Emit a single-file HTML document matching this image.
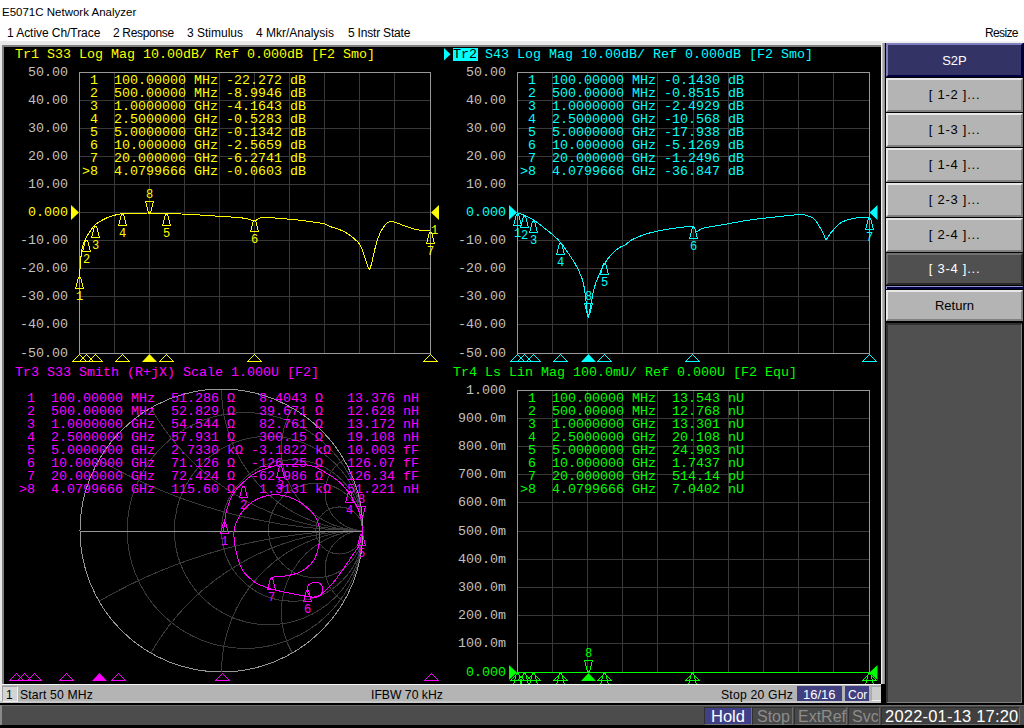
<!DOCTYPE html><html><head><meta charset="utf-8"><style>
*{margin:0;padding:0;box-sizing:border-box}
html,body{width:1024px;height:728px;overflow:hidden;background:#f0f0f0}
.a{position:absolute}
.t{position:absolute;white-space:pre;font-family:"Liberation Mono",monospace;font-size:13.333px;line-height:13px}
.s{position:absolute;white-space:pre;font-family:"Liberation Sans",sans-serif;font-size:12px;line-height:14px;color:#000}
.btn{position:absolute;left:886px;width:136px;height:33px;background:#b4b4b4;border-top:1px solid #f0f0f0;border-left:1px solid #f0f0f0;border-right:1px solid #606060;border-bottom:1px solid #606060;font-family:"Liberation Sans",sans-serif;font-size:12px;text-align:center;line-height:31px;color:#000}
</style></head><body>

<div class="a" style="left:0;top:0;width:1024px;height:41px;background:#fff"></div>
<div class="s" style="left:2px;top:5px;font-size:11.5px">E5071C Network Analyzer</div>
<div class="s" style="left:7px;top:26px;letter-spacing:-0.06px">1 Active Ch/Trace</div>
<div class="s" style="left:113px;top:26px;letter-spacing:-0.33px">2 Response</div>
<div class="s" style="left:187px;top:26px;letter-spacing:0px">3 Stimulus</div>
<div class="s" style="left:256px;top:26px;letter-spacing:0px">4 Mkr/Analysis</div>
<div class="s" style="left:348px;top:26px;letter-spacing:-0.2px">5 Instr State</div>
<div class="s" style="left:985px;top:26px;letter-spacing:-0.65px">Resize</div>
<div class="a" style="left:0;top:41px;width:885px;height:663px;background:#e8e8e8"></div>
<div class="a" style="left:2px;top:45px;width:881px;height:2px;background:#808080"></div>
<div class="a" style="left:2px;top:45px;width:2px;height:639px;background:#808080"></div>
<div class="a" style="left:4px;top:47px;width:877px;height:637px;background:#000"></div>
<svg class="a" style="left:0;top:0" width="1024" height="728" viewBox="0 0 1024 728"><line x1="114.5" y1="72" x2="114.5" y2="354" stroke="#383838" stroke-width="1"/>
<line x1="149.5" y1="72" x2="149.5" y2="354" stroke="#383838" stroke-width="1"/>
<line x1="184.5" y1="72" x2="184.5" y2="354" stroke="#383838" stroke-width="1"/>
<line x1="219.5" y1="72" x2="219.5" y2="354" stroke="#383838" stroke-width="1"/>
<line x1="254.5" y1="72" x2="254.5" y2="354" stroke="#383838" stroke-width="1"/>
<line x1="289.5" y1="72" x2="289.5" y2="354" stroke="#383838" stroke-width="1"/>
<line x1="324.5" y1="72" x2="324.5" y2="354" stroke="#383838" stroke-width="1"/>
<line x1="359.5" y1="72" x2="359.5" y2="354" stroke="#383838" stroke-width="1"/>
<line x1="394.5" y1="72" x2="394.5" y2="354" stroke="#383838" stroke-width="1"/>
<line x1="79" y1="100.5" x2="431" y2="100.5" stroke="#383838" stroke-width="1"/>
<line x1="79" y1="128.5" x2="431" y2="128.5" stroke="#383838" stroke-width="1"/>
<line x1="79" y1="156.5" x2="431" y2="156.5" stroke="#383838" stroke-width="1"/>
<line x1="79" y1="184.5" x2="431" y2="184.5" stroke="#383838" stroke-width="1"/>
<line x1="79" y1="212.5" x2="431" y2="212.5" stroke="#383838" stroke-width="1"/>
<line x1="79" y1="240.5" x2="431" y2="240.5" stroke="#383838" stroke-width="1"/>
<line x1="79" y1="268.5" x2="431" y2="268.5" stroke="#383838" stroke-width="1"/>
<line x1="79" y1="296.5" x2="431" y2="296.5" stroke="#383838" stroke-width="1"/>
<line x1="79" y1="324.5" x2="431" y2="324.5" stroke="#383838" stroke-width="1"/>
<rect x="79.5" y="72.5" width="351" height="281" fill="none" stroke="#989898" stroke-width="1"/>
<line x1="552.5" y1="72" x2="552.5" y2="354" stroke="#383838" stroke-width="1"/>
<line x1="587.5" y1="72" x2="587.5" y2="354" stroke="#383838" stroke-width="1"/>
<line x1="622.5" y1="72" x2="622.5" y2="354" stroke="#383838" stroke-width="1"/>
<line x1="657.5" y1="72" x2="657.5" y2="354" stroke="#383838" stroke-width="1"/>
<line x1="693.5" y1="72" x2="693.5" y2="354" stroke="#383838" stroke-width="1"/>
<line x1="728.5" y1="72" x2="728.5" y2="354" stroke="#383838" stroke-width="1"/>
<line x1="763.5" y1="72" x2="763.5" y2="354" stroke="#383838" stroke-width="1"/>
<line x1="798.5" y1="72" x2="798.5" y2="354" stroke="#383838" stroke-width="1"/>
<line x1="833.5" y1="72" x2="833.5" y2="354" stroke="#383838" stroke-width="1"/>
<line x1="517" y1="100.5" x2="870" y2="100.5" stroke="#383838" stroke-width="1"/>
<line x1="517" y1="128.5" x2="870" y2="128.5" stroke="#383838" stroke-width="1"/>
<line x1="517" y1="156.5" x2="870" y2="156.5" stroke="#383838" stroke-width="1"/>
<line x1="517" y1="184.5" x2="870" y2="184.5" stroke="#383838" stroke-width="1"/>
<line x1="517" y1="212.5" x2="870" y2="212.5" stroke="#383838" stroke-width="1"/>
<line x1="517" y1="240.5" x2="870" y2="240.5" stroke="#383838" stroke-width="1"/>
<line x1="517" y1="268.5" x2="870" y2="268.5" stroke="#383838" stroke-width="1"/>
<line x1="517" y1="296.5" x2="870" y2="296.5" stroke="#383838" stroke-width="1"/>
<line x1="517" y1="324.5" x2="870" y2="324.5" stroke="#383838" stroke-width="1"/>
<rect x="517.5" y="72.5" width="352" height="281" fill="none" stroke="#989898" stroke-width="1"/>
<line x1="552.5" y1="390" x2="552.5" y2="673" stroke="#383838" stroke-width="1"/>
<line x1="587.5" y1="390" x2="587.5" y2="673" stroke="#383838" stroke-width="1"/>
<line x1="622.5" y1="390" x2="622.5" y2="673" stroke="#383838" stroke-width="1"/>
<line x1="657.5" y1="390" x2="657.5" y2="673" stroke="#383838" stroke-width="1"/>
<line x1="693.5" y1="390" x2="693.5" y2="673" stroke="#383838" stroke-width="1"/>
<line x1="728.5" y1="390" x2="728.5" y2="673" stroke="#383838" stroke-width="1"/>
<line x1="763.5" y1="390" x2="763.5" y2="673" stroke="#383838" stroke-width="1"/>
<line x1="798.5" y1="390" x2="798.5" y2="673" stroke="#383838" stroke-width="1"/>
<line x1="833.5" y1="390" x2="833.5" y2="673" stroke="#383838" stroke-width="1"/>
<line x1="517" y1="418.5" x2="870" y2="418.5" stroke="#383838" stroke-width="1"/>
<line x1="517" y1="446.5" x2="870" y2="446.5" stroke="#383838" stroke-width="1"/>
<line x1="517" y1="474.5" x2="870" y2="474.5" stroke="#383838" stroke-width="1"/>
<line x1="517" y1="502.5" x2="870" y2="502.5" stroke="#383838" stroke-width="1"/>
<line x1="517" y1="531.5" x2="870" y2="531.5" stroke="#383838" stroke-width="1"/>
<line x1="517" y1="559.5" x2="870" y2="559.5" stroke="#383838" stroke-width="1"/>
<line x1="517" y1="587.5" x2="870" y2="587.5" stroke="#383838" stroke-width="1"/>
<line x1="517" y1="615.5" x2="870" y2="615.5" stroke="#383838" stroke-width="1"/>
<line x1="517" y1="643.5" x2="870" y2="643.5" stroke="#383838" stroke-width="1"/>
<rect x="517.5" y="390.5" width="352" height="282" fill="none" stroke="#989898" stroke-width="1"/>
<g fill="none" stroke="#3a3a3a" stroke-width="1" shape-rendering="crispEdges">
<circle cx="245.08" cy="530.50" r="117.92"/>
<circle cx="268.67" cy="530.50" r="94.33"/>
<circle cx="292.25" cy="530.50" r="70.75"/>
<circle cx="315.83" cy="530.50" r="47.17"/>
<circle cx="339.42" cy="530.50" r="23.58"/>
<path d="M363.00,530.50 A37.91,37.91 0 0 1 344.04,459.75"/>
<path d="M363.00,530.50 A37.91,37.91 0 0 0 344.04,601.25"/>
<path d="M363.00,530.50 A81.70,81.70 0 0 1 292.25,407.96"/>
<path d="M363.00,530.50 A81.70,81.70 0 0 0 292.25,653.04"/>
<path d="M363.00,530.50 A141.50,141.50 0 0 1 221.50,389.00"/>
<path d="M363.00,530.50 A141.50,141.50 0 0 0 221.50,672.00"/>
<path d="M363.00,530.50 A245.09,245.09 0 0 1 150.75,407.96"/>
<path d="M363.00,530.50 A245.09,245.09 0 0 0 150.75,653.04"/>
<path d="M363.00,530.50 A528.09,528.09 0 0 1 98.96,459.75"/>
<path d="M363.00,530.50 A528.09,528.09 0 0 0 98.96,601.25"/>
</g>
<circle cx="221.5" cy="530.5" r="141.5" fill="none" stroke="#989898" stroke-width="1" shape-rendering="crispEdges"/>
<line x1="80.0" y1="531.5" x2="363.0" y2="531.5" stroke="#989898" stroke-width="1"/>
<polyline points="79.5,277.0 79.7,274.8 79.9,271.6 80.1,267.9 80.4,264.1 80.7,260.6 80.9,257.7 81.1,255.5 81.3,253.7 81.5,252.2 81.7,250.8 81.9,249.5 82.2,248.1 82.6,246.6 83.0,245.1 83.5,243.6 84.0,242.3 84.5,241.0 85.0,239.8 85.4,238.8 85.9,238.0 86.3,237.3 86.7,236.6 87.2,235.8 87.7,235.0 88.3,234.0 89.0,233.0 89.7,231.9 90.5,230.8 91.2,229.8 91.9,228.8 92.6,227.9 93.2,227.0 93.9,226.2 94.5,225.4 95.2,224.7 96.0,224.0 96.8,223.4 97.7,222.8 98.6,222.2 99.5,221.7 100.5,221.2 101.5,220.6 102.6,220.0 103.7,219.4 104.8,218.8 106.0,218.2 107.1,217.7 108.3,217.2 109.4,216.8 110.6,216.4 111.7,216.0 112.9,215.7 114.1,215.4 115.2,215.1 116.3,214.8 117.3,214.5 118.3,214.3 119.3,214.1 120.5,213.9 122.0,213.7 123.7,213.6 125.5,213.5 127.4,213.4 129.5,213.4 131.9,213.3 134.4,213.3 137.3,213.2 140.5,213.2 144.0,213.1 147.5,213.0 150.9,213.0 154.0,213.0 156.8,213.0 159.4,213.1 161.8,213.2 164.4,213.3 167.0,213.4 170.0,213.5 173.4,213.6 177.1,213.8 181.1,214.0 185.0,214.1 188.7,214.3 192.0,214.5 194.9,214.7 197.5,214.8 199.9,215.0 202.2,215.2 204.5,215.3 207.0,215.5 209.6,215.7 212.3,215.8 215.0,216.0 217.7,216.2 220.4,216.3 223.0,216.5 225.6,216.7 228.3,216.8 230.9,217.0 233.4,217.1 235.8,217.3 238.0,217.5 240.0,217.7 241.9,217.9 243.6,218.2 245.1,218.4 246.6,218.7 248.0,219.0 249.3,219.4 250.4,219.8 251.4,220.2 252.3,220.6 253.2,220.9 254.0,221.0 254.8,220.9 255.5,220.6 256.1,220.2 256.7,219.8 257.4,219.4 258.0,219.0 258.7,218.7 259.3,218.4 259.9,218.1 260.6,217.9 261.3,217.7 262.0,217.5 262.7,217.4 263.3,217.4 263.9,217.3 264.6,217.4 265.6,217.4 267.0,217.5 268.8,217.6 271.1,217.8 273.6,217.9 276.2,218.1 278.7,218.3 281.0,218.5 283.0,218.7 284.9,218.8 286.8,219.0 288.5,219.2 290.3,219.3 292.0,219.5 293.7,219.7 295.3,219.8 296.8,219.9 298.4,220.1 300.1,220.3 302.0,220.5 304.2,220.8 306.6,221.1 309.1,221.5 311.6,221.8 313.9,222.2 316.0,222.5 317.8,222.8 319.5,223.0 321.1,223.2 322.5,223.4 323.8,223.7 325.0,224.0 326.0,224.3 326.7,224.7 327.3,225.1 327.9,225.5 328.8,226.0 330.0,226.5 331.7,227.1 333.7,227.7 335.9,228.4 338.2,229.2 340.4,230.0 342.4,230.8 344.2,231.7 345.9,232.7 347.6,233.7 349.2,234.8 350.7,235.9 352.2,237.0 353.6,238.2 355.0,239.3 356.3,240.6 357.6,241.8 358.7,243.1 359.7,244.4 360.5,245.7 361.2,247.1 361.8,248.5 362.3,249.9 362.8,251.4 363.4,253.0 364.0,254.8 364.7,256.8 365.3,258.8 366.0,260.8 366.6,262.7 367.1,264.2 367.6,265.5 367.9,266.7 368.3,267.7 368.6,268.4 369.0,268.9 369.3,269.1 369.6,269.0 370.0,268.5 370.3,267.8 370.6,266.8 371.0,265.6 371.4,264.2 371.9,262.4 372.4,260.2 372.9,257.8 373.4,255.3 374.0,252.8 374.5,250.6 375.0,248.6 375.5,246.6 376.0,244.8 376.5,242.9 377.0,241.2 377.6,239.4 378.2,237.7 378.9,235.9 379.6,234.3 380.3,232.6 381.1,231.1 381.9,229.6 382.8,228.2 383.8,226.7 384.8,225.4 385.9,224.2 387.0,223.2 388.1,222.4 389.2,221.9 390.4,221.7 391.6,221.7 392.9,221.9 394.2,222.1 395.5,222.4 396.8,222.8 398.2,223.3 399.5,223.9 401.0,224.5 402.5,225.2 404.2,225.8 406.0,226.4 408.0,227.1 410.1,227.8 412.3,228.5 414.4,229.1 416.5,229.6 418.7,230.0 421.0,230.2 423.4,230.4 425.6,230.6 427.5,230.7 428.9,230.8 429.8,230.9 430.1,230.9 430.2,231.0 430.1,231.0 430.0,231.0 430.0,231.0" fill="none" stroke="#ffff00" stroke-width="1" stroke-linejoin="round" shape-rendering="crispEdges"/>
<polyline points="517.5,212.9 518.3,213.2 519.3,213.5 520.5,213.9 521.8,214.4 523.2,214.9 524.6,215.5 526.0,216.1 527.4,216.7 528.9,217.4 530.4,218.2 532.0,219.0 533.6,220.0 535.3,221.1 537.1,222.4 539.0,223.8 540.8,225.3 542.6,226.7 544.3,228.0 545.9,229.2 547.5,230.5 549.0,231.7 550.4,232.8 551.8,234.0 553.2,235.2 554.5,236.4 555.7,237.5 556.9,238.6 558.1,239.7 559.2,241.0 560.4,242.3 561.6,243.8 562.8,245.3 564.0,247.0 565.1,248.7 566.3,250.4 567.5,252.1 568.7,253.8 569.9,255.6 571.2,257.4 572.4,259.3 573.5,261.1 574.6,262.9 575.6,264.7 576.6,266.5 577.5,268.3 578.4,270.0 579.2,271.8 580.0,273.6 580.7,275.3 581.4,276.9 582.0,278.5 582.5,280.2 583.1,282.1 583.6,284.3 584.1,286.9 584.6,289.8 585.0,292.9 585.4,296.1 585.8,299.2 586.2,302.1 586.5,305.1 586.8,308.4 587.1,311.5 587.4,314.3 587.7,316.3 588.0,317.3 588.4,317.0 588.8,315.6 589.2,313.6 589.7,311.0 590.2,308.3 590.7,305.7 591.2,303.1 591.8,300.1 592.3,297.0 592.9,293.8 593.6,290.7 594.3,287.9 595.1,285.3 595.9,282.7 596.8,280.3 597.8,278.0 598.7,275.7 599.6,273.6 600.5,271.6 601.3,269.7 602.2,267.9 603.1,266.2 604.0,264.5 605.0,262.9 606.1,261.3 607.2,259.7 608.4,258.1 609.7,256.6 610.9,255.2 612.1,253.9 613.3,252.7 614.5,251.5 615.8,250.4 617.0,249.4 618.2,248.5 619.3,247.7 620.3,247.1 621.2,246.6 622.1,246.3 623.0,246.0 624.0,245.6 625.0,245.0 626.1,244.2 627.2,243.3 628.4,242.4 629.7,241.3 631.1,240.3 632.7,239.4 634.5,238.5 636.6,237.6 638.7,236.7 641.0,235.8 643.2,235.0 645.4,234.3 647.5,233.6 649.6,233.0 651.7,232.5 653.8,232.0 655.9,231.5 658.0,231.0 660.0,230.6 661.9,230.2 663.8,229.8 665.9,229.5 668.2,229.2 670.8,228.8 674.1,228.3 678.0,227.8 682.1,227.2 686.1,226.7 689.6,226.4 692.3,226.5 693.9,227.0 694.7,228.0 695.0,229.2 695.1,230.4 695.4,231.4 696.0,231.8 696.9,231.7 697.9,231.2 699.0,230.4 700.3,229.5 701.9,228.7 703.8,228.0 706.1,227.5 708.7,227.0 711.5,226.6 714.7,226.1 718.0,225.6 721.5,225.0 725.3,224.3 729.4,223.5 733.8,222.7 738.2,221.9 742.7,221.1 747.0,220.4 751.2,219.8 755.4,219.2 759.7,218.7 763.9,218.2 768.1,217.8 772.3,217.3 776.7,216.8 781.3,216.3 785.9,215.8 790.4,215.4 794.4,215.0 797.7,214.8 800.3,214.7 802.3,214.7 803.9,214.9 805.2,215.1 806.4,215.4 807.8,215.8 809.2,216.3 810.5,216.8 811.8,217.4 813.0,218.1 814.2,219.1 815.4,220.4 816.7,222.1 818.1,224.2 819.5,226.6 820.8,229.0 822.0,231.2 823.0,233.0 823.7,234.6 824.3,236.1 824.7,237.4 825.0,238.4 825.5,239.1 826.0,239.4 826.6,239.1 827.2,238.4 827.9,237.2 828.7,235.9 829.6,234.4 830.7,233.0 832.0,231.5 833.6,229.7 835.3,227.8 837.0,226.0 838.9,224.3 840.8,222.9 842.7,221.8 844.7,220.9 846.8,220.1 849.0,219.4 851.2,218.9 853.5,218.4 856.1,218.0 858.9,217.7 861.9,217.6 864.7,217.5 867.0,217.4 868.7,217.3" fill="none" stroke="#00ffff" stroke-width="1" stroke-linejoin="round" shape-rendering="crispEdges"/>
<line x1="517" y1="672.5" x2="870" y2="672.5" stroke="#00ff00" stroke-width="1"/>
<polygon points="78.5,277.5 80.5,277.5 83.5,288.5 75.5,288.5" fill="none" stroke="#ffff00" stroke-width="1" shape-rendering="crispEdges"/>
<polygon points="85.5,240.5 87.5,240.5 90.5,251.5 82.5,251.5" fill="none" stroke="#ffff00" stroke-width="1" shape-rendering="crispEdges"/>
<polygon points="94.5,226.5 96.5,226.5 99.5,237.5 91.5,237.5" fill="none" stroke="#ffff00" stroke-width="1" shape-rendering="crispEdges"/>
<polygon points="121.5,214.5 123.5,214.5 126.5,225.5 118.5,225.5" fill="none" stroke="#ffff00" stroke-width="1" shape-rendering="crispEdges"/>
<polygon points="165.5,214.5 167.5,214.5 170.5,225.5 162.5,225.5" fill="none" stroke="#ffff00" stroke-width="1" shape-rendering="crispEdges"/>
<polygon points="253.5,220.5 255.5,220.5 258.5,231.5 250.5,231.5" fill="none" stroke="#ffff00" stroke-width="1" shape-rendering="crispEdges"/>
<polygon points="429.5,232.5 431.5,232.5 434.5,243.5 426.5,243.5" fill="none" stroke="#ffff00" stroke-width="1" shape-rendering="crispEdges"/>
<polygon points="148.5,212.5 150.5,212.5 153.5,201.5 145.5,201.5" fill="none" stroke="#ffff00" stroke-width="1" shape-rendering="crispEdges"/>
<polygon points="516.5,214.5 518.5,214.5 521.5,225.5 513.5,225.5" fill="none" stroke="#00ffff" stroke-width="1" shape-rendering="crispEdges"/>
<polygon points="523.5,216.5 525.5,216.5 528.5,227.5 520.5,227.5" fill="none" stroke="#00ffff" stroke-width="1" shape-rendering="crispEdges"/>
<polygon points="532.5,221.5 534.5,221.5 537.5,232.5 529.5,232.5" fill="none" stroke="#00ffff" stroke-width="1" shape-rendering="crispEdges"/>
<polygon points="559.5,243.5 561.5,243.5 564.5,254.5 556.5,254.5" fill="none" stroke="#00ffff" stroke-width="1" shape-rendering="crispEdges"/>
<polygon points="603.5,263.5 605.5,263.5 608.5,274.5 600.5,274.5" fill="none" stroke="#00ffff" stroke-width="1" shape-rendering="crispEdges"/>
<polygon points="692.5,227.5 694.5,227.5 697.5,238.5 689.5,238.5" fill="none" stroke="#00ffff" stroke-width="1" shape-rendering="crispEdges"/>
<polygon points="868.5,218.5 870.5,218.5 873.5,229.5 865.5,229.5" fill="none" stroke="#00ffff" stroke-width="1" shape-rendering="crispEdges"/>
<polygon points="587.5,314.5 589.5,314.5 592.5,303.5 584.5,303.5" fill="none" stroke="#00ffff" stroke-width="1" shape-rendering="crispEdges"/>
<polygon points="79.5,354.5 72.5,361.5 86.5,361.5" fill="none" stroke="#ffff00" stroke-width="1" shape-rendering="crispEdges"/>
<polygon points="86.5,354.5 79.5,361.5 93.5,361.5" fill="none" stroke="#ffff00" stroke-width="1" shape-rendering="crispEdges"/>
<polygon points="95.5,354.5 88.5,361.5 102.5,361.5" fill="none" stroke="#ffff00" stroke-width="1" shape-rendering="crispEdges"/>
<polygon points="122.5,354.5 115.5,361.5 129.5,361.5" fill="none" stroke="#ffff00" stroke-width="1" shape-rendering="crispEdges"/>
<polygon points="166.5,354.5 159.5,361.5 173.5,361.5" fill="none" stroke="#ffff00" stroke-width="1" shape-rendering="crispEdges"/>
<polygon points="254.5,354.5 247.5,361.5 261.5,361.5" fill="none" stroke="#ffff00" stroke-width="1" shape-rendering="crispEdges"/>
<polygon points="430.5,354.5 423.5,361.5 437.5,361.5" fill="none" stroke="#ffff00" stroke-width="1" shape-rendering="crispEdges"/>
<polygon points="149.5,354 142.0,362 157.0,362" fill="#ffff00" stroke="none"/>
<polygon points="517.5,354.5 510.5,361.5 524.5,361.5" fill="none" stroke="#00ffff" stroke-width="1" shape-rendering="crispEdges"/>
<polygon points="524.5,354.5 517.5,361.5 531.5,361.5" fill="none" stroke="#00ffff" stroke-width="1" shape-rendering="crispEdges"/>
<polygon points="533.5,354.5 526.5,361.5 540.5,361.5" fill="none" stroke="#00ffff" stroke-width="1" shape-rendering="crispEdges"/>
<polygon points="560.5,354.5 553.5,361.5 567.5,361.5" fill="none" stroke="#00ffff" stroke-width="1" shape-rendering="crispEdges"/>
<polygon points="604.5,354.5 597.5,361.5 611.5,361.5" fill="none" stroke="#00ffff" stroke-width="1" shape-rendering="crispEdges"/>
<polygon points="692.5,354.5 685.5,361.5 699.5,361.5" fill="none" stroke="#00ffff" stroke-width="1" shape-rendering="crispEdges"/>
<polygon points="869.5,354.5 862.5,361.5 876.5,361.5" fill="none" stroke="#00ffff" stroke-width="1" shape-rendering="crispEdges"/>
<polygon points="588.5,354 581.0,362 596.0,362" fill="#00ffff" stroke="none"/>
<polygon points="16.5,673.5 9.5,680.5 23.5,680.5" fill="none" stroke="#ff00ff" stroke-width="1" shape-rendering="crispEdges"/>
<polygon points="24.5,673.5 17.5,680.5 31.5,680.5" fill="none" stroke="#ff00ff" stroke-width="1" shape-rendering="crispEdges"/>
<polygon points="34.5,673.5 27.5,680.5 41.5,680.5" fill="none" stroke="#ff00ff" stroke-width="1" shape-rendering="crispEdges"/>
<polygon points="66.5,673.5 59.5,680.5 73.5,680.5" fill="none" stroke="#ff00ff" stroke-width="1" shape-rendering="crispEdges"/>
<polygon points="118.5,673.5 111.5,680.5 125.5,680.5" fill="none" stroke="#ff00ff" stroke-width="1" shape-rendering="crispEdges"/>
<polygon points="222.5,673.5 215.5,680.5 229.5,680.5" fill="none" stroke="#ff00ff" stroke-width="1" shape-rendering="crispEdges"/>
<polygon points="431.5,673.5 424.5,680.5 438.5,680.5" fill="none" stroke="#ff00ff" stroke-width="1" shape-rendering="crispEdges"/>
<polygon points="99.5,673 92.0,681 107.0,681" fill="#ff00ff" stroke="none"/>
<polygon points="517.5,673.5 510.5,680.5 524.5,680.5" fill="none" stroke="#00ff00" stroke-width="1" shape-rendering="crispEdges"/>
<polygon points="524.5,673.5 517.5,680.5 531.5,680.5" fill="none" stroke="#00ff00" stroke-width="1" shape-rendering="crispEdges"/>
<polygon points="533.5,673.5 526.5,680.5 540.5,680.5" fill="none" stroke="#00ff00" stroke-width="1" shape-rendering="crispEdges"/>
<polygon points="560.5,673.5 553.5,680.5 567.5,680.5" fill="none" stroke="#00ff00" stroke-width="1" shape-rendering="crispEdges"/>
<polygon points="604.5,673.5 597.5,680.5 611.5,680.5" fill="none" stroke="#00ff00" stroke-width="1" shape-rendering="crispEdges"/>
<polygon points="692.5,673.5 685.5,680.5 699.5,680.5" fill="none" stroke="#00ff00" stroke-width="1" shape-rendering="crispEdges"/>
<polygon points="869.5,673.5 862.5,680.5 876.5,680.5" fill="none" stroke="#00ff00" stroke-width="1" shape-rendering="crispEdges"/>
<polygon points="588.5,673 581.0,681 596.0,681" fill="#00ff00" stroke="none"/>
<polygon points="71,205.0 79,212.5 71,220.0" fill="#ffff00"/>
<polygon points="439,205.0 431,212.5 439,220.0" fill="#ffff00"/>
<polygon points="509,205.0 517,212.5 509,220.0" fill="#00ffff"/>
<polygon points="877.5,205.0 869.5,212.5 877.5,220.0" fill="#00ffff"/>
<polygon points="509,665.0 517,672.5 509,680.0" fill="#00ff00"/>
<polygon points="877.5,665.0 869.5,672.5 877.5,680.0" fill="#00ff00"/>
<polygon points="444,48 450.5,54.2 444,60.5" fill="#00ffff"/>
<polyline points="223.5,531.0 223.6,530.5 223.6,529.9 223.7,529.1 223.8,528.2 224.0,526.9 224.2,525.4 224.4,523.5 224.7,521.2 225.0,518.7 225.4,516.0 225.9,513.3 226.5,510.6 227.3,507.9 228.2,505.0 229.3,502.1 230.4,499.2 231.7,496.5 233.0,494.0 234.4,491.8 236.0,489.8 237.6,487.9 239.3,486.1 241.1,484.4 243.0,482.6 245.0,480.8 247.0,479.0 249.2,477.3 251.4,475.6 253.7,474.1 256.0,472.7 258.4,471.5 261.0,470.4 263.7,469.4 266.3,468.5 268.8,467.7 271.0,467.0 272.9,466.4 274.5,465.9 275.9,465.6 277.3,465.3 278.9,465.0 280.8,464.8 283.0,464.6 285.3,464.5 287.8,464.4 290.4,464.4 293.1,464.4 295.7,464.5 298.3,464.6 301.0,464.6 303.7,464.7 306.5,464.9 309.2,465.3 312.0,466.0 314.8,467.0 317.7,468.3 320.6,469.8 323.4,471.4 326.1,472.9 328.6,474.4 330.8,475.8 332.9,477.1 334.8,478.4 336.6,479.7 338.3,481.1 340.0,482.6 341.6,484.1 343.0,485.7 344.4,487.2 345.7,488.9 347.0,490.6 348.4,492.5 349.8,494.5 351.3,496.7 352.8,499.0 354.2,501.3 355.5,503.6 356.6,505.7 357.5,507.7 358.4,509.5 359.1,511.4 359.7,513.2 360.2,515.1 360.7,517.2 361.2,519.6 361.6,522.3 361.9,525.0 362.2,527.7 362.3,530.1 362.4,532.0 362.3,533.4 362.2,534.3 361.9,534.9 361.6,535.5 361.3,536.1 361.0,537.0 360.8,538.2 360.6,539.5 360.4,540.8 360.1,542.2 359.8,543.6 359.3,545.0 358.7,546.2 358.1,547.3 357.3,548.4 356.5,549.6 355.5,551.0 354.3,552.7 352.9,554.8 351.3,557.2 349.6,559.8 347.8,562.5 345.9,565.3 344.1,567.9 342.2,570.5 340.3,573.2 338.3,575.9 336.4,578.6 334.5,581.0 332.7,583.2 331.0,585.1 329.4,586.8 327.9,588.3 326.4,589.6 325.1,590.9 323.8,592.0 322.7,593.0 321.7,594.0 320.8,594.8 319.9,595.5 319.0,596.0 318.0,596.5 316.9,596.9 315.8,597.2 314.6,597.3 313.5,597.4 312.4,597.3 311.5,597.0 310.6,596.5 309.8,595.8 309.1,594.9 308.5,594.0 308.0,593.0 307.6,592.0 307.4,591.0 307.3,589.8 307.3,588.6 307.4,587.5 307.7,586.4 308.2,585.5 308.9,584.7 309.9,584.0 311.1,583.3 312.3,582.8 313.5,582.4 314.6,582.2 315.7,582.2 316.7,582.3 317.8,582.6 318.8,583.0 319.7,583.4 320.5,584.0 321.2,584.7 321.8,585.5 322.3,586.4 322.7,587.3 322.9,588.3 323.0,589.2 322.9,590.1 322.7,591.1 322.3,592.0 321.8,592.9 321.2,593.8 320.5,594.5 319.7,595.1 318.8,595.7 317.8,596.2 316.7,596.6 315.4,596.8 314.0,597.0 312.3,597.0 310.4,596.8 308.3,596.5 306.1,596.2 304.0,595.8 302.0,595.5 300.1,595.2 298.4,594.9 296.6,594.5 294.8,594.1 292.9,593.7 290.8,593.3 288.4,592.8 285.8,592.3 283.1,591.8 280.4,591.2 277.8,590.6 275.5,590.1 273.5,589.6 271.8,589.2 270.3,588.8 268.8,588.3 267.2,587.7 265.4,587.0 263.4,586.2 261.4,585.4 259.2,584.6 257.0,583.5 254.8,582.2 252.7,580.6 250.5,578.8 248.3,576.8 246.0,574.5 243.8,572.0 241.8,569.0 240.1,565.5 238.6,561.2 237.2,556.1 235.9,550.6 234.9,545.0 234.2,539.8 233.9,535.3 234.0,531.6 234.5,528.2 235.3,525.3 236.3,522.6 237.5,520.0 238.7,517.5 240.0,515.1 241.5,512.8 243.1,510.7 244.8,508.7 246.6,506.8 248.4,505.1 250.3,503.5 252.2,502.1 254.1,500.8 256.2,499.6 258.4,498.5 260.7,497.6 263.2,496.8 265.9,496.1 268.7,495.5 271.5,495.0 274.4,494.8 277.2,494.8 280.0,495.0 282.8,495.5 285.6,496.1 288.4,496.9 291.1,497.9 293.7,498.9 296.2,500.1 298.7,501.5 301.1,503.1 303.3,504.7 305.5,506.3 307.4,507.9 309.1,509.4 310.7,510.9 312.1,512.4 313.4,514.0 314.6,515.7 315.7,517.5 316.7,519.5 317.6,521.7 318.4,523.9 319.0,526.3 319.5,528.7 319.8,531.2 319.9,533.8 319.9,536.6 319.7,539.5 319.4,542.3 318.9,545.1 318.4,547.7 317.8,550.2 317.1,552.6 316.2,555.0 315.3,557.2 314.2,559.4 312.9,561.4 311.4,563.3 309.7,565.1 307.8,566.8 305.9,568.4 303.9,569.8 301.9,571.0 299.9,572.0 298.0,572.9 295.9,573.6 293.9,574.2 291.8,574.7 289.6,575.2 287.2,575.6 284.7,576.0 282.1,576.2 279.5,576.4 277.3,576.6 275.5,576.8 274.2,577.0 273.2,577.1 272.4,577.2 271.9,577.4 271.5,577.4 271.1,577.5" fill="none" stroke="#ff00ff" stroke-width="1" stroke-linejoin="round" shape-rendering="crispEdges"/>
<polygon points="223.5,522.5 225.5,522.5 228.5,533.5 220.5,533.5" fill="none" stroke="#ff00ff" stroke-width="1" shape-rendering="crispEdges"/>
<polygon points="242.5,486.5 244.5,486.5 247.5,497.5 239.5,497.5" fill="none" stroke="#ff00ff" stroke-width="1" shape-rendering="crispEdges"/>
<polygon points="279.5,466.5 281.5,466.5 284.5,477.5 276.5,477.5" fill="none" stroke="#ff00ff" stroke-width="1" shape-rendering="crispEdges"/>
<polygon points="348.5,491.5 350.5,491.5 353.5,502.5 345.5,502.5" fill="none" stroke="#ff00ff" stroke-width="1" shape-rendering="crispEdges"/>
<polygon points="360.5,534.5 362.5,534.5 365.5,545.5 357.5,545.5" fill="none" stroke="#ff00ff" stroke-width="1" shape-rendering="crispEdges"/>
<polygon points="306.5,590.5 308.5,590.5 311.5,601.5 303.5,601.5" fill="none" stroke="#ff00ff" stroke-width="1" shape-rendering="crispEdges"/>
<polygon points="270.5,578.5 272.5,578.5 275.5,589.5 267.5,589.5" fill="none" stroke="#ff00ff" stroke-width="1" shape-rendering="crispEdges"/>
<polygon points="360.5,517.5 362.5,517.5 365.5,506.5 357.5,506.5" fill="none" stroke="#ff00ff" stroke-width="1" shape-rendering="crispEdges"/>
<polygon points="587.5,671.5 589.5,671.5 592.5,660.5 584.5,660.5" fill="none" stroke="#00ff00" stroke-width="1" shape-rendering="crispEdges"/>
<polygon points="516.5,673.5 518.5,673.5 521.5,684.5 513.5,684.5" fill="none" stroke="#00ff00" stroke-width="1" shape-rendering="crispEdges"/>
<polygon points="523.5,673.5 525.5,673.5 528.5,684.5 520.5,684.5" fill="none" stroke="#00ff00" stroke-width="1" shape-rendering="crispEdges"/>
<polygon points="532.5,673.5 534.5,673.5 537.5,684.5 529.5,684.5" fill="none" stroke="#00ff00" stroke-width="1" shape-rendering="crispEdges"/>
<polygon points="559.5,673.5 561.5,673.5 564.5,684.5 556.5,684.5" fill="none" stroke="#00ff00" stroke-width="1" shape-rendering="crispEdges"/>
<polygon points="603.5,673.5 605.5,673.5 608.5,684.5 600.5,684.5" fill="none" stroke="#00ff00" stroke-width="1" shape-rendering="crispEdges"/>
<polygon points="691.5,673.5 693.5,673.5 696.5,684.5 688.5,684.5" fill="none" stroke="#00ff00" stroke-width="1" shape-rendering="crispEdges"/>
<polygon points="868.5,673.5 870.5,673.5 873.5,684.5 865.5,684.5" fill="none" stroke="#00ff00" stroke-width="1" shape-rendering="crispEdges"/></svg>
<div class="t" style="left:15px;top:48px;color:#ffff00">Tr1 S33 Log Mag 10.00dB/ Ref 0.000dB [F2 Smo]</div>
<div class="t" style="left:485px;top:48px;color:#00ffff">S43 Log Mag 10.00dB/ Ref 0.000dB [F2 Smo]</div>
<div class="a" style="left:453px;top:48px;width:25px;height:13px;background:#00ffff"></div>
<div class="t" style="left:453px;top:48px;color:#000">Tr2</div>
<div class="t" style="left:15px;top:366px;color:#ff00ff">Tr3 S33 Smith (R+jX) Scale 1.000U [F2]</div>
<div class="t" style="left:15px;top:365px;color:#ff00ff"></div>
<div class="t" style="left:453px;top:366px;color:#00ff00">Tr4 Ls Lin Mag 100.0mU/ Ref 0.000U [F2 Equ]</div>
<div class="t" style="left:28px;top:66px;color:#c0c0c0">50.00</div>
<div class="t" style="left:466px;top:66px;color:#c0c0c0">50.00</div>
<div class="t" style="left:28px;top:94px;color:#c0c0c0">40.00</div>
<div class="t" style="left:466px;top:94px;color:#c0c0c0">40.00</div>
<div class="t" style="left:28px;top:122px;color:#c0c0c0">30.00</div>
<div class="t" style="left:466px;top:122px;color:#c0c0c0">30.00</div>
<div class="t" style="left:28px;top:150px;color:#c0c0c0">20.00</div>
<div class="t" style="left:466px;top:150px;color:#c0c0c0">20.00</div>
<div class="t" style="left:28px;top:178px;color:#c0c0c0">10.00</div>
<div class="t" style="left:466px;top:178px;color:#c0c0c0">10.00</div>
<div class="t" style="left:28px;top:206px;color:#ffff00">0.000</div>
<div class="t" style="left:466px;top:206px;color:#00ffff">0.000</div>
<div class="t" style="left:20px;top:234px;color:#c0c0c0">-10.00</div>
<div class="t" style="left:458px;top:234px;color:#c0c0c0">-10.00</div>
<div class="t" style="left:20px;top:262px;color:#c0c0c0">-20.00</div>
<div class="t" style="left:458px;top:262px;color:#c0c0c0">-20.00</div>
<div class="t" style="left:20px;top:290px;color:#c0c0c0">-30.00</div>
<div class="t" style="left:458px;top:290px;color:#c0c0c0">-30.00</div>
<div class="t" style="left:20px;top:318px;color:#c0c0c0">-40.00</div>
<div class="t" style="left:458px;top:318px;color:#c0c0c0">-40.00</div>
<div class="t" style="left:20px;top:347px;color:#c0c0c0">-50.00</div>
<div class="t" style="left:458px;top:347px;color:#c0c0c0">-50.00</div>
<div class="t" style="left:466px;top:384px;color:#c0c0c0">1.000</div>
<div class="t" style="left:458px;top:412px;color:#c0c0c0">900.0m</div>
<div class="t" style="left:458px;top:440px;color:#c0c0c0">800.0m</div>
<div class="t" style="left:458px;top:468px;color:#c0c0c0">700.0m</div>
<div class="t" style="left:458px;top:496px;color:#c0c0c0">600.0m</div>
<div class="t" style="left:458px;top:525px;color:#c0c0c0">500.0m</div>
<div class="t" style="left:458px;top:553px;color:#c0c0c0">400.0m</div>
<div class="t" style="left:458px;top:581px;color:#c0c0c0">300.0m</div>
<div class="t" style="left:458px;top:609px;color:#c0c0c0">200.0m</div>
<div class="t" style="left:458px;top:637px;color:#c0c0c0">100.0m</div>
<div class="t" style="left:466px;top:666px;color:#00ff00">0.000</div>
<div class="t" style="left:82px;top:74px;color:#ffff00"> 1  100.00000 MHz -22.272 dB
 2  500.00000 MHz -8.9946 dB
 3  1.0000000 GHz -4.1643 dB
 4  2.5000000 GHz -0.5283 dB
 5  5.0000000 GHz -0.1342 dB
 6  10.000000 GHz -2.5659 dB
 7  20.000000 GHz -6.2741 dB
&gt;8  4.0799666 GHz -0.0603 dB</div>
<div class="t" style="left:520px;top:74px;color:#00ffff"> 1  100.00000 MHz -0.1430 dB
 2  500.00000 MHz -0.8515 dB
 3  1.0000000 GHz -2.4929 dB
 4  2.5000000 GHz -10.568 dB
 5  5.0000000 GHz -17.938 dB
 6  10.000000 GHz -5.1269 dB
 7  20.000000 GHz -1.2496 dB
&gt;8  4.0799666 GHz -36.847 dB</div>
<div class="t" style="left:19px;top:392px;color:#ff00ff"> 1  100.00000 MHz  51.286 Ω   8.4043 Ω   13.376 nH
 2  500.00000 MHz  52.829 Ω   39.671 Ω   12.628 nH
 3  1.0000000 GHz  54.544 Ω   82.761 Ω   13.172 nH
 4  2.5000000 GHz  57.931 Ω   300.15 Ω   19.108 nH
 5  5.0000000 GHz  2.7330 kΩ -3.1822 kΩ  10.003 fF
 6  10.000000 GHz  71.126 Ω  -126.25 Ω   126.07 fF
 7  20.000000 GHz  72.424 Ω  -62.986 Ω   126.34 fF
&gt;8  4.0799666 GHz  115.60 Ω   1.3131 kΩ  51.221 nH</div>
<div class="t" style="left:520px;top:392px;color:#00ff00"> 1  100.00000 MHz  13.543 nU
 2  500.00000 MHz  12.768 nU
 3  1.0000000 GHz  13.301 nU
 4  2.5000000 GHz  20.108 nU
 5  5.0000000 GHz  24.903 nU
 6  10.000000 GHz  1.7437 nU
 7  20.000000 GHz  514.14 pU
&gt;8  4.0799666 GHz  7.0402 nU</div>
<div class="t" style="left:76px;top:291px;color:#ffff00;font-size:12px;line-height:13px">1</div>
<div class="t" style="left:83px;top:254px;color:#ffff00;font-size:12px;line-height:13px">2</div>
<div class="t" style="left:92px;top:240px;color:#ffff00;font-size:12px;line-height:13px">3</div>
<div class="t" style="left:119px;top:228px;color:#ffff00;font-size:12px;line-height:13px">4</div>
<div class="t" style="left:163px;top:228px;color:#ffff00;font-size:12px;line-height:13px">5</div>
<div class="t" style="left:251px;top:234px;color:#ffff00;font-size:12px;line-height:13px">6</div>
<div class="t" style="left:427px;top:246px;color:#ffff00;font-size:12px;line-height:13px">7</div>
<div class="t" style="left:146px;top:189px;color:#ffff00;font-size:12px;line-height:13px">8</div>
<div class="t" style="left:514px;top:228px;color:#00ffff;font-size:12px;line-height:13px">1</div>
<div class="t" style="left:521px;top:230px;color:#00ffff;font-size:12px;line-height:13px">2</div>
<div class="t" style="left:530px;top:235px;color:#00ffff;font-size:12px;line-height:13px">3</div>
<div class="t" style="left:557px;top:257px;color:#00ffff;font-size:12px;line-height:13px">4</div>
<div class="t" style="left:601px;top:277px;color:#00ffff;font-size:12px;line-height:13px">5</div>
<div class="t" style="left:690px;top:241px;color:#00ffff;font-size:12px;line-height:13px">6</div>
<div class="t" style="left:866px;top:232px;color:#00ffff;font-size:12px;line-height:13px">7</div>
<div class="t" style="left:585px;top:291px;color:#00ffff;font-size:12px;line-height:13px">8</div>
<div class="t" style="left:221px;top:536px;color:#ff00ff;font-size:12px;line-height:13px">1</div>
<div class="t" style="left:240px;top:500px;color:#ff00ff;font-size:12px;line-height:13px">2</div>
<div class="t" style="left:277px;top:480px;color:#ff00ff;font-size:12px;line-height:13px">3</div>
<div class="t" style="left:346px;top:505px;color:#ff00ff;font-size:12px;line-height:13px">4</div>
<div class="t" style="left:358px;top:548px;color:#ff00ff;font-size:12px;line-height:13px">5</div>
<div class="t" style="left:304px;top:604px;color:#ff00ff;font-size:12px;line-height:13px">6</div>
<div class="t" style="left:268px;top:592px;color:#ff00ff;font-size:12px;line-height:13px">7</div>
<div class="t" style="left:358px;top:494px;color:#ff00ff;font-size:12px;line-height:13px">8</div>
<div class="t" style="left:585px;top:648px;color:#00ff00;font-size:12px;line-height:13px">8</div>
<div class="t" style="left:431px;top:225px;color:#ffff00;font-size:12px;line-height:13px">1</div>
<div class="a" style="left:0;top:684px;width:885px;height:19px;background:#b4b4b4;border-top:1px solid #f4f4f4"></div>
<div class="a" style="left:0;top:684px;width:2px;height:19px;background:#e8e8e8"></div>
<div class="a" style="left:0;top:701px;width:885px;height:2px;background:#c8c8c8"></div>
<div class="a" style="left:2px;top:686px;width:16px;height:16px;background:#d4d4d4;border-top:1px solid #a0a0a0;border-left:1px solid #a0a0a0;border-right:1px solid #f0f0f0;border-bottom:1px solid #f0f0f0"></div>
<div class="s" style="left:6px;top:688px">1</div>
<div class="s" style="left:20px;top:688px;font-size:12.2px;letter-spacing:0.15px">Start 50 MHz</div>
<div class="s" style="left:371px;top:688px;font-size:12.2px">IFBW 70 kHz</div>
<div class="s" style="left:721px;top:688px;font-size:12.2px;letter-spacing:0.2px">Stop 20 GHz</div>
<div class="a" style="left:797px;top:686px;width:45px;height:15px;background:#404080"></div>
<div class="s" style="left:803px;top:688px;color:#fff;font-size:13px">16/16</div>
<div class="a" style="left:845px;top:686px;width:24px;height:15px;background:#404080"></div>
<div class="s" style="left:848px;top:688px;color:#fff;font-size:12px">Cor</div>
<div class="a" style="left:871px;top:686px;width:11px;height:15px;background:#cccccc;border-top:1px solid #a8a8a8;border-left:1px solid #a8a8a8;border-right:1px solid #f0f0f0;border-bottom:1px solid #f0f0f0"></div>
<div class="a" style="left:881px;top:684px;width:4px;height:19px;background:#d8d8d8"></div>
<div class="a" style="left:0;top:703px;width:1024px;height:25px;background:#000"></div>
<div class="a" style="left:0;top:705px;width:1024px;height:20px;background:#4c4c4c;border-top:1px solid #6c6c6c;border-left:2px solid #8a8a8a"></div>
<div class="a" style="left:704px;top:707px;width:48px;height:18px;background:#404088;border-top:1px solid #303030;border-left:1px solid #303030;border-bottom:1px solid #707070;border-right:1px solid #707070"></div>
<div class="s" style="left:711px;top:707px;color:#fff;font-size:16.5px;line-height:18px">Hold</div>
<div class="a" style="left:752px;top:707px;width:41px;height:18px;background:#484848;border-top:1px solid #303030;border-left:1px solid #303030;border-bottom:1px solid #6c6c6c;border-right:1px solid #6c6c6c"></div>
<div class="s" style="left:757px;top:708px;color:#8c8c8c;font-size:16px;line-height:18px">Stop</div>
<div class="a" style="left:794px;top:707px;width:53px;height:18px;background:#484848;border-top:1px solid #303030;border-left:1px solid #303030;border-bottom:1px solid #6c6c6c;border-right:1px solid #6c6c6c"></div>
<div class="s" style="left:798px;top:708px;color:#8c8c8c;font-size:16px;line-height:18px">ExtRef</div>
<div class="a" style="left:848px;top:707px;width:32px;height:18px;background:#484848;border-top:1px solid #303030;border-left:1px solid #303030;border-bottom:1px solid #6c6c6c;border-right:1px solid #6c6c6c"></div>
<div class="s" style="left:852px;top:708px;color:#8c8c8c;font-size:16px;line-height:18px">Svc</div>
<div class="a" style="left:881px;top:707px;width:139px;height:18px;background:#404040;border-top:1px solid #303030;border-left:1px solid #303030;border-bottom:1px solid #6c6c6c;border-right:1px solid #6c6c6c"></div>
<div class="s" style="left:885px;top:707px;color:#fff;font-size:16.5px;line-height:18px;letter-spacing:0.2px">2022-01-13 17:20</div>
<div class="a" style="left:881px;top:41px;width:143px;height:662px;background:#000"></div>
<div class="a" style="left:881px;top:41px;width:143px;height:2px;background:#f0f0f0"></div>
<div class="a" style="left:881px;top:43px;width:1px;height:641px;background:#f0f0f0"></div>
<div class="a" style="left:882px;top:43px;width:3px;height:641px;background:linear-gradient(90deg,#c4c4c4,#848484)"></div>
<div class="a" style="left:886px;top:323px;width:136px;height:380px;background:#505050;border-top:2px solid #303030;border-left:2px solid #303030;border-right:1px solid #808080;border-bottom:1px solid #808080"></div>
<div class="a" style="left:886px;top:43px;width:137px;height:34px;background:#333366;border-top:2px solid #8080c0;border-left:2px solid #8080c0;border-bottom:2px solid #000040;border-right:2px solid #000040;color:#fff"></div>
<div class="s" style="left:886px;top:44px;width:137px;height:34px;line-height:34px;text-align:center;font-size:13px;color:#fff;font-size:13px">S2P</div>
<div class="a" style="left:886px;top:78px;width:137px;height:34px;background:#b4b4b4;border-top:2px solid #e8e8e8;border-left:2px solid #e8e8e8;border-bottom:2px solid #808080;border-right:2px solid #808080;color:#000"></div>
<div class="s" style="left:886px;top:78px;width:137px;height:34px;line-height:34px;text-align:center;font-size:13px;color:#000;letter-spacing:0.75px">[ 1-2 ]...</div>
<div class="a" style="left:886px;top:113px;width:137px;height:34px;background:#b4b4b4;border-top:2px solid #e8e8e8;border-left:2px solid #e8e8e8;border-bottom:2px solid #808080;border-right:2px solid #808080;color:#000"></div>
<div class="s" style="left:886px;top:113px;width:137px;height:34px;line-height:34px;text-align:center;font-size:13px;color:#000;letter-spacing:0.75px">[ 1-3 ]...</div>
<div class="a" style="left:886px;top:148px;width:137px;height:34px;background:#b4b4b4;border-top:2px solid #e8e8e8;border-left:2px solid #e8e8e8;border-bottom:2px solid #808080;border-right:2px solid #808080;color:#000"></div>
<div class="s" style="left:886px;top:148px;width:137px;height:34px;line-height:34px;text-align:center;font-size:13px;color:#000;letter-spacing:0.75px">[ 1-4 ]...</div>
<div class="a" style="left:886px;top:183px;width:137px;height:34px;background:#b4b4b4;border-top:2px solid #e8e8e8;border-left:2px solid #e8e8e8;border-bottom:2px solid #808080;border-right:2px solid #808080;color:#000"></div>
<div class="s" style="left:886px;top:183px;width:137px;height:34px;line-height:34px;text-align:center;font-size:13px;color:#000;letter-spacing:0.75px">[ 2-3 ]...</div>
<div class="a" style="left:886px;top:218px;width:137px;height:34px;background:#b4b4b4;border-top:2px solid #e8e8e8;border-left:2px solid #e8e8e8;border-bottom:2px solid #808080;border-right:2px solid #808080;color:#000"></div>
<div class="s" style="left:886px;top:218px;width:137px;height:34px;line-height:34px;text-align:center;font-size:13px;color:#000;letter-spacing:0.75px">[ 2-4 ]...</div>
<div class="a" style="left:886px;top:253px;width:137px;height:32px;background:#505050;border-top:2px solid #707070;border-left:2px solid #707070;border-bottom:2px solid #282828;border-right:2px solid #282828;color:#fff"></div>
<div class="s" style="left:886px;top:253px;width:137px;height:32px;line-height:32px;text-align:center;font-size:13px;color:#fff;letter-spacing:0.75px">[ 3-4 ]...</div>
<div class="a" style="left:886px;top:286px;width:137px;height:3px;background:#000040;border-top:1px solid #9090d0;border-left:1px solid #9090d0"></div>
<div class="a" style="left:886px;top:290px;width:137px;height:31px;background:#b4b4b4;border-top:2px solid #e8e8e8;border-left:2px solid #e8e8e8;border-bottom:2px solid #808080;border-right:2px solid #808080;color:#000"></div>
<div class="s" style="left:886px;top:290px;width:137px;height:31px;line-height:31px;text-align:center;font-size:13px;color:#000;">Return</div>
</body></html>
